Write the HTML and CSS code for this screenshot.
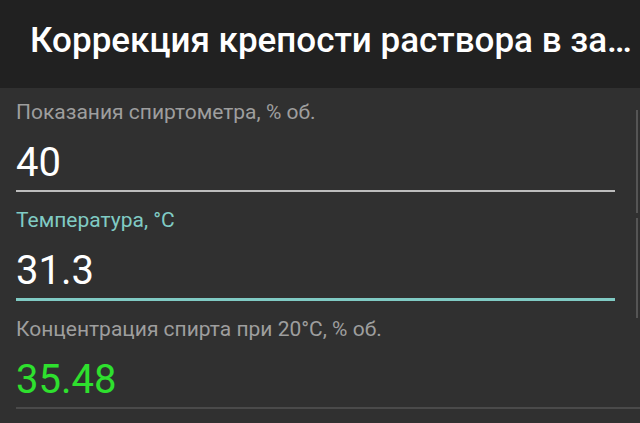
FILE: index.html
```html
<!DOCTYPE html>
<html lang="ru">
<head>
<meta charset="utf-8">
<link rel="stylesheet" href="styles.css">
</head>
<body>
<div class="app">
  <header class="toolbar">
    <h1 class="title">Коррекция крепости раствора в за…</h1>
  </header>
  <main class="content">
    <div class="form">
      <div class="field">
        <div class="label">Показания спиртометра, % об.</div>
        <div class="value">40</div>
        <div class="line"></div>
      </div>
      <div class="field focused">
        <div class="label">Температура, °C</div>
        <div class="value">31.3</div>
        <div class="line"></div>
      </div>
      <div class="field result">
        <div class="label">Концентрация спирта при 20°C, % об.</div>
        <div class="value">35.48</div>
        <div class="line"></div>
      </div>
    </div>
    <div class="side">
      <div class="edge edge-1"></div>
      <div class="edge edge-2"></div>
    </div>
  </main>
</div>
</body>
</html>
```
FILE: styles.css
```css
html, body {
  margin: 0;
  padding: 0;
}
body {
  width: 640px;
  height: 423px;
  overflow: hidden;
  background: #303030;
  font-family: Roboto, "Noto Sans", "DejaVu Sans", sans-serif;
}
.app {
  display: flex;
  flex-direction: column;
  height: 423px;
}
.toolbar {
  flex: 0 0 88px;
  height: 88px;
  background: #212121;
  display: flex;
  align-items: flex-start;
  overflow: hidden;
}
.title {
  margin: 0;
  padding: 20px 0 0 30px;
  font-size: 35px;
  line-height: 42px;
  font-weight: 500;
  color: #ffffff;
  white-space: nowrap;
}
.content {
  display: flex;
  flex: 1;
}
.form {
  flex: 1;
  padding-top: 12px;
}
.field {
  padding: 0 21px 0 16px;
  margin-bottom: 16px;
}
.field.result {
  padding-right: 0;
  margin-right: -4px;
}
.label {
  height: 24px;
  line-height: 24px;
  font-size: 21px;
  color: #9e9e9e;
  white-space: nowrap;
}
.value {
  margin-top: 13px;
  height: 50px;
  line-height: 52px;
  font-size: 40px;
  color: #ffffff;
}
.line {
  margin-top: 3px;
  height: 2px;
  background: #bdbdbd;
}
.focused .label {
  color: #80cbc4;
}
.focused .line {
  height: 3px;
  background: #80cbc4;
}
.result .value {
  color: #2ee02e;
}
.result .line {
  height: 2px;
  background: #4a4a4a;
}
.side {
  width: 4px;
  padding-top: 22px;
}
.edge {
  width: 2px;
  background: #555555;
}
.edge-1 {
  height: 103px;
}
.edge-2 {
  margin-top: 5px;
  height: 100px;
}
```
